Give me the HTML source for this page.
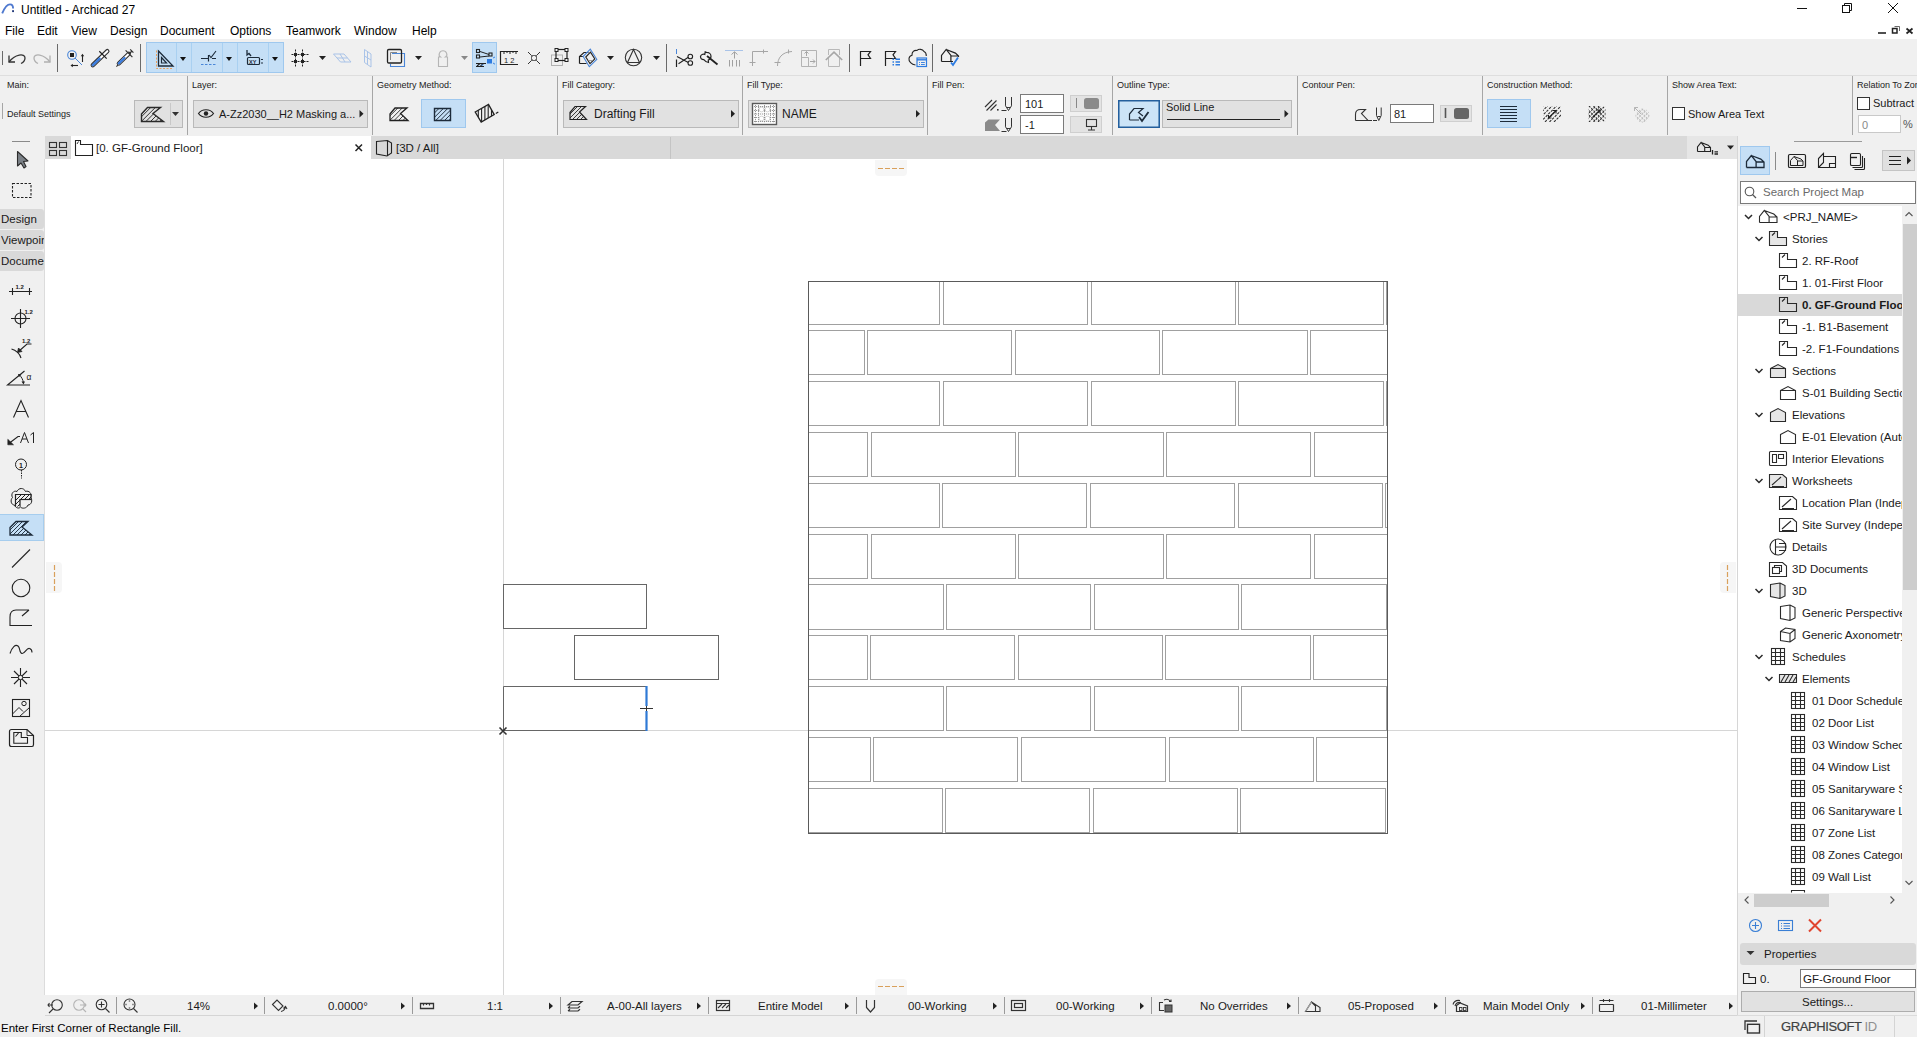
<!DOCTYPE html>
<html><head><meta charset="utf-8">
<style>
*{box-sizing:border-box}
html,body{margin:0;padding:0}
body{width:1917px;height:1037px;overflow:hidden;position:relative;background:#f0f0f0;font-family:"Liberation Sans",sans-serif;font-size:12px;color:#1a1a1a}
.a{position:absolute}
.t{position:absolute;white-space:nowrap;line-height:14px;color:#1a1a1a}
.lb{position:absolute;white-space:nowrap;font-size:9px;line-height:11px;color:#222}
.sep{position:absolute;width:1px;background:#a6a6a6}
.dd{position:absolute;background:#e1e1e1;border:1px solid #b9b9b9}
.fld{position:absolute;background:#fff;border:1px solid #7a7a7a}
.blu{position:absolute;background:#c5dff6;border:1px solid #9fc8ee}
.tr{position:absolute;white-space:nowrap;font-size:11.5px;line-height:14px;color:#1a1a1a}
svg.ov{position:absolute;left:0;top:0;overflow:visible}
</style></head><body>
<!-- title + menu -->
<div class="a" style="left:0;top:0;width:1917px;height:39px;background:#fff"></div>
<div class="t" style="left:21px;top:3px;font-size:12px;color:#000">Untitled - Archicad 27</div>
<div class="t" style="left:5px;top:24px;font-size:12px;color:#000">File</div>
<div class="t" style="left:37px;top:24px;font-size:12px;color:#000">Edit</div>
<div class="t" style="left:71px;top:24px;font-size:12px;color:#000">View</div>
<div class="t" style="left:110px;top:24px;font-size:12px;color:#000">Design</div>
<div class="t" style="left:160px;top:24px;font-size:12px;color:#000">Document</div>
<div class="t" style="left:230px;top:24px;font-size:12px;color:#000">Options</div>
<div class="t" style="left:286px;top:24px;font-size:12px;color:#000">Teamwork</div>
<div class="t" style="left:354px;top:24px;font-size:12px;color:#000">Window</div>
<div class="t" style="left:412px;top:24px;font-size:12px;color:#000">Help</div>

<!-- toolbar bottom line -->
<div class="a" style="left:0;top:75px;width:1917px;height:1px;background:#dedede"></div>
<!-- toolbar blue groups -->
<div class="blu" style="left:146px;top:42px;width:138px;height:31px"></div>
<div class="a" style="left:176px;top:43px;width:1px;height:29px;background:#a9d0f1"></div>
<div class="a" style="left:191px;top:43px;width:1px;height:29px;background:#a9d0f1"></div>
<div class="a" style="left:222px;top:43px;width:1px;height:29px;background:#a9d0f1"></div>
<div class="a" style="left:237px;top:43px;width:1px;height:29px;background:#a9d0f1"></div>
<div class="a" style="left:268px;top:43px;width:1px;height:29px;background:#a9d0f1"></div>
<div class="blu" style="left:472px;top:42px;width:25px;height:31px"></div>
<!-- toolbar separators -->
<div class="a" style="left:2px;top:51px;width:1px;height:14px;background:#6a6a6a"></div>
<div class="a" style="left:57px;top:44px;width:1px;height:28px;background:#6a6a6a"></div>
<div class="a" style="left:140px;top:44px;width:1px;height:28px;background:#6a6a6a"></div>
<div class="a" style="left:666px;top:44px;width:1px;height:28px;background:#6a6a6a"></div>
<div class="a" style="left:849px;top:44px;width:1px;height:28px;background:#6a6a6a"></div>
<div class="a" style="left:932px;top:44px;width:1px;height:28px;background:#6a6a6a"></div>

<!-- info box separators -->
<div class="sep" style="left:187px;top:76px;height:59px"></div>
<div class="sep" style="left:372px;top:76px;height:59px"></div>
<div class="sep" style="left:557px;top:76px;height:59px"></div>
<div class="sep" style="left:742px;top:76px;height:59px"></div>
<div class="sep" style="left:927px;top:76px;height:59px"></div>
<div class="sep" style="left:1112px;top:76px;height:59px"></div>
<div class="sep" style="left:1297px;top:76px;height:59px"></div>
<div class="sep" style="left:1482px;top:76px;height:59px"></div>
<div class="sep" style="left:1667px;top:76px;height:59px"></div>
<div class="sep" style="left:1852px;top:76px;height:59px"></div>
<div class="sep" style="left:2px;top:103px;height:16px"></div>

<!-- tab bar -->
<div class="a" style="left:45px;top:136px;width:1642px;height:23px;background:#d9d9d9"></div>
<div class="a" style="left:1687px;top:136px;width:50px;height:23px;background:#e6e6e6"></div>
<div class="a" style="left:71px;top:136px;width:300px;height:23px;background:#fff"></div>
<div class="a" style="left:670px;top:137px;width:1px;height:22px;background:#c4c4c4"></div>

<!-- canvas -->
<div class="a" style="left:45px;top:159px;width:1692px;height:836px;background:#fff"></div>
<div class="a" style="left:503px;top:159px;width:1px;height:836px;background:#d6d6d6"></div>
<div class="a" style="left:45px;top:730px;width:1692px;height:1px;background:#d6d6d6"></div>
<!-- canvas handles -->
<div class="a" style="left:875px;top:160px;width:32px;height:16px;background:#f6f6f6;border-radius:0 0 4px 4px"></div>
<div class="a" style="left:875px;top:979px;width:32px;height:16px;background:#f6f6f6;border-radius:4px 4px 0 0"></div>
<div class="a" style="left:46px;top:562px;width:16px;height:31px;background:#f6f6f6;border-radius:0 4px 4px 0"></div>
<div class="a" style="left:1720px;top:562px;width:16px;height:31px;background:#f6f6f6;border-radius:4px 0 0 4px"></div>

<!-- toolbox edge -->
<div class="a" style="left:44px;top:159px;width:1px;height:836px;background:#dcdcdc"></div>

<!-- quick options bar -->
<div class="a" style="left:45px;top:995px;width:1692px;height:20px;background:#f0f0f0"></div>
<div class="a" style="left:45px;top:1015px;width:1692px;height:1px;background:#d5d5d5"></div>
<!-- status bar -->
<div class="t" style="left:1px;top:1021px;font-size:11.5px;color:#000">Enter First Corner of Rectangle Fill.</div>
<!-- info box labels -->
<div class="lb" style="left:7px;top:80px">Main:</div>
<div class="lb" style="left:192px;top:80px">Layer:</div>
<div class="lb" style="left:377px;top:80px">Geometry Method:</div>
<div class="lb" style="left:562px;top:80px">Fill Category:</div>
<div class="lb" style="left:747px;top:80px">Fill Type:</div>
<div class="lb" style="left:932px;top:80px">Fill Pen:</div>
<div class="lb" style="left:1117px;top:80px">Outline Type:</div>
<div class="lb" style="left:1302px;top:80px">Contour Pen:</div>
<div class="lb" style="left:1487px;top:80px">Construction Method:</div>
<div class="lb" style="left:1672px;top:80px">Show Area Text:</div>
<div class="lb" style="left:1857px;top:80px">Relation To Zone:</div>
<div class="lb" style="left:7px;top:109px">Default Settings</div>

<!-- main favorites button -->
<div class="dd" style="left:134px;top:100px;width:49px;height:28px"></div>
<div class="a" style="left:170px;top:103px;width:1px;height:22px;background:#c8c8c8"></div>
<!-- layer dropdown -->
<div class="dd" style="left:193px;top:100px;width:175px;height:28px"></div>
<div class="t" style="left:219px;top:107px;font-size:11px">A-Zz2030__H2 Masking a...</div>
<!-- geometry -->
<div class="blu" style="left:421px;top:99px;width:45px;height:29px"></div>
<!-- fill category -->
<div class="dd" style="left:563px;top:100px;width:176px;height:28px"></div>
<div class="t" style="left:594px;top:107px;font-size:12px">Drafting Fill</div>
<!-- fill type -->
<div class="dd" style="left:748px;top:100px;width:176px;height:28px"></div>
<div class="t" style="left:782px;top:107px;font-size:12px">NAME</div>
<!-- fill pen fields -->
<div class="fld" style="left:1020px;top:94px;width:44px;height:19px"></div>
<div class="t" style="left:1025px;top:97px;font-size:11px">101</div>
<div class="fld" style="left:1020px;top:115px;width:44px;height:19px"></div>
<div class="t" style="left:1025px;top:118px;font-size:11px">-1</div>
<div class="dd" style="left:1070px;top:95px;width:32px;height:17px;background:#e3e3e3;border-color:#cfcfcf"></div>
<div class="dd" style="left:1070px;top:116px;width:32px;height:17px;background:#e3e3e3;border-color:#cfcfcf"></div>
<!-- outline type -->
<div class="blu" style="left:1118px;top:100px;width:42px;height:28px;border-color:#2a7ad6;background:#cce4f7"></div>
<div class="dd" style="left:1162px;top:100px;width:130px;height:28px"></div>
<div class="t" style="left:1166px;top:100px;font-size:11px">Solid Line</div>
<div class="a" style="left:1167px;top:119px;width:113px;height:1px;background:#222"></div>
<!-- contour pen -->
<div class="fld" style="left:1390px;top:104px;width:44px;height:19px"></div>
<div class="t" style="left:1394px;top:107px;font-size:11px">81</div>
<div class="dd" style="left:1440px;top:105px;width:32px;height:17px;background:#e3e3e3;border-color:#cfcfcf"></div>
<!-- construction method -->
<div class="blu" style="left:1487px;top:99px;width:44px;height:29px"></div>
<!-- show area text -->
<div class="a" style="left:1672px;top:107px;width:13px;height:13px;background:#fff;border:1px solid #333"></div>
<div class="t" style="left:1688px;top:107px;font-size:11px">Show Area Text</div>
<!-- relation to zone -->
<div class="a" style="left:1857px;top:97px;width:13px;height:13px;background:#fff;border:1px solid #333"></div>
<div class="t" style="left:1873px;top:96px;font-size:11px">Subtract</div>
<div class="fld" style="left:1858px;top:115px;width:43px;height:18px;border-color:#c9c9c9"></div>
<div class="t" style="left:1862px;top:118px;font-size:11px;color:#888">0</div>
<div class="t" style="left:1903px;top:117px;font-size:11px;color:#555">%</div>
<!-- tabs text -->
<div class="t" style="left:96px;top:141px;font-size:11.5px">[0. GF-Ground Floor]</div>
<div class="t" style="left:396px;top:141px;font-size:11.5px">[3D / All]</div>

<!-- toolbox palette tabs -->
<div class="a" style="left:0;top:209px;width:44px;height:20px;background:#d9d9d9;border-radius:0 3px 3px 0"></div>
<div class="a" style="left:0;top:230px;width:44px;height:20px;background:#d9d9d9;border-radius:0 3px 3px 0"></div>
<div class="a" style="left:0;top:251px;width:44px;height:20px;background:#d9d9d9;border-radius:0 3px 3px 0"></div>
<div class="t" style="left:1px;top:212px;font-size:11.5px;width:43px;overflow:hidden">Design</div>
<div class="t" style="left:1px;top:233px;font-size:11.5px;width:43px;overflow:hidden">Viewpoints</div>
<div class="t" style="left:1px;top:254px;font-size:11.5px;width:43px;overflow:hidden">Document</div>
<div class="a" style="left:0;top:514px;width:44px;height:27px;background:#c5dff6;border:1px solid #a6cdee;border-left:0"></div>

<!-- navigator -->
<div class="a" style="left:1737px;top:136px;width:180px;height:901px;background:#f0f0f0"></div>
<div class="a" style="left:1794px;top:141px;width:68px;height:1px;background:#9a9a9a"></div>
<div class="blu" style="left:1740px;top:146px;width:30px;height:29px"></div>
<div class="a" style="left:1775px;top:152px;width:1px;height:18px;background:#8a8a8a"></div>
<div class="dd" style="left:1882px;top:150px;width:33px;height:21px;background:#e0e0e0;border-color:#c4c4c4"></div>
<div class="fld" style="left:1740px;top:181px;width:176px;height:23px"></div>
<div class="t" style="left:1763px;top:185px;font-size:11.5px;color:#6a6a6a">Search Project Map</div>
<div class="a" style="left:1738px;top:206px;width:164px;height:687px;background:#fff"></div>
<div class="a" style="left:1902px;top:206px;width:15px;height:687px;background:#f0f0f0"></div>
<div class="a" style="left:1903px;top:224px;width:14px;height:366px;background:#cdcdcd"></div>
<div class="a" style="left:1738px;top:294px;width:164px;height:22px;background:#d9d9d9"></div>
<!-- tree -->
<div class="tr" style="left:1783px;top:210px">&lt;PRJ_NAME&gt;</div>
<div class="tr" style="left:1792px;top:232px">Stories</div>
<div class="tr" style="left:1802px;top:254px">2. RF-Roof</div>
<div class="tr" style="left:1802px;top:276px">1. 01-First Floor</div>
<div class="tr" style="left:1802px;top:298px;font-weight:bold">0. GF-Ground Floor</div>
<div class="tr" style="left:1802px;top:320px">-1. B1-Basement</div>
<div class="tr" style="left:1802px;top:342px">-2. F1-Foundations</div>
<div class="tr" style="left:1792px;top:364px">Sections</div>
<div class="tr" style="left:1802px;top:386px">S-01 Building Section</div>
<div class="tr" style="left:1792px;top:408px">Elevations</div>
<div class="tr" style="left:1802px;top:430px">E-01 Elevation (Auto)</div>
<div class="tr" style="left:1792px;top:452px">Interior Elevations</div>
<div class="tr" style="left:1792px;top:474px">Worksheets</div>
<div class="tr" style="left:1802px;top:496px">Location Plan (Independent)</div>
<div class="tr" style="left:1802px;top:518px">Site Survey (Independent)</div>
<div class="tr" style="left:1792px;top:540px">Details</div>
<div class="tr" style="left:1792px;top:562px">3D Documents</div>
<div class="tr" style="left:1792px;top:584px">3D</div>
<div class="tr" style="left:1802px;top:606px">Generic Perspective</div>
<div class="tr" style="left:1802px;top:628px">Generic Axonometry</div>
<div class="tr" style="left:1792px;top:650px">Schedules</div>
<div class="tr" style="left:1802px;top:672px">Elements</div>
<div class="tr" style="left:1812px;top:694px">01 Door Schedule</div>
<div class="tr" style="left:1812px;top:716px">02 Door List</div>
<div class="tr" style="left:1812px;top:738px">03 Window Schedule</div>
<div class="tr" style="left:1812px;top:760px">04 Window List</div>
<div class="tr" style="left:1812px;top:782px">05 Sanitaryware Schedule</div>
<div class="tr" style="left:1812px;top:804px">06 Sanitaryware List</div>
<div class="tr" style="left:1812px;top:826px">07 Zone List</div>
<div class="tr" style="left:1812px;top:848px">08 Zones Category</div>
<div class="tr" style="left:1812px;top:870px">09 Wall List</div>
<!-- re-cover tree overflow on right -->
<div class="a" style="left:1902px;top:206px;width:1px;height:687px;background:#f0f0f0"></div>
<div class="a" style="left:1903px;top:206px;width:14px;height:18px;background:#f0f0f0"></div>
<div class="a" style="left:1903px;top:224px;width:14px;height:366px;background:#cdcdcd"></div>
<div class="a" style="left:1903px;top:590px;width:14px;height:303px;background:#f0f0f0"></div>
<!-- h scrollbar -->
<div class="a" style="left:1738px;top:893px;width:179px;height:15px;background:#f0f0f0"></div>
<div class="a" style="left:1754px;top:894px;width:75px;height:13px;background:#cdcdcd"></div>
<!-- properties -->
<div class="a" style="left:1740px;top:943px;width:176px;height:22px;background:#d9d9d9;border-radius:3px"></div>
<div class="t" style="left:1764px;top:947px;font-size:11.5px">Properties</div>
<div class="t" style="left:1760px;top:972px;font-size:11.5px">0.</div>
<div class="fld" style="left:1800px;top:969px;width:116px;height:19px"></div>
<div class="t" style="left:1803px;top:972px;font-size:11.5px">GF-Ground Floor</div>
<div class="dd" style="left:1741px;top:991px;width:174px;height:21px;background:#e1e1e1;border-color:#adadad"></div>
<div class="t" style="left:1802px;top:995px;font-size:11.5px">Settings...</div>
<div class="t" style="left:1781px;top:1020px;font-size:13px;color:#3f4242;letter-spacing:-0.4px;-webkit-text-stroke:0.2px #3f4242">GRAPHISOFT <span style="color:#8f8f8f;-webkit-text-stroke:0">ID</span></div>

<!-- quick options text -->
<div class="t" style="left:187px;top:999px;font-size:11.5px">14%</div>
<div class="t" style="left:328px;top:999px;font-size:11.5px">0.0000°</div>
<div class="t" style="left:487px;top:999px;font-size:11.5px">1:1</div>
<div class="t" style="left:607px;top:999px;font-size:11.5px">A-00-All layers</div>
<div class="t" style="left:758px;top:999px;font-size:11.5px">Entire Model</div>
<div class="t" style="left:908px;top:999px;font-size:11.5px">00-Working</div>
<div class="t" style="left:1056px;top:999px;font-size:11.5px">00-Working</div>
<div class="t" style="left:1200px;top:999px;font-size:11.5px">No Overrides</div>
<div class="t" style="left:1348px;top:999px;font-size:11.5px">05-Proposed</div>
<div class="t" style="left:1483px;top:999px;font-size:11.5px">Main Model Only</div>
<div class="t" style="left:1641px;top:999px;font-size:11.5px">01-Millimeter</div>
<div class="a" style="left:116px;top:997px;width:1px;height:17px;background:#9a9a9a"></div>
<div class="a" style="left:264px;top:997px;width:1px;height:17px;background:#9a9a9a"></div>
<div class="a" style="left:412px;top:997px;width:1px;height:17px;background:#9a9a9a"></div>
<div class="a" style="left:560px;top:997px;width:1px;height:17px;background:#9a9a9a"></div>
<div class="a" style="left:708px;top:997px;width:1px;height:17px;background:#9a9a9a"></div>
<div class="a" style="left:856px;top:997px;width:1px;height:17px;background:#9a9a9a"></div>
<div class="a" style="left:1004px;top:997px;width:1px;height:17px;background:#9a9a9a"></div>
<div class="a" style="left:1151px;top:997px;width:1px;height:17px;background:#9a9a9a"></div>
<div class="a" style="left:1298px;top:997px;width:1px;height:17px;background:#9a9a9a"></div>
<div class="a" style="left:1445px;top:997px;width:1px;height:17px;background:#9a9a9a"></div>
<div class="a" style="left:1592px;top:997px;width:1px;height:17px;background:#9a9a9a"></div>
<svg class="ov" width="1917" height="1037">
<rect x="808.5" y="281.5" width="579" height="552" fill="#fff" stroke="none"/>
<g fill="none" stroke="#a0a0a0" stroke-width="1">
<rect x="808.5" y="281.5" width="131" height="43"/>
<rect x="943.5" y="281.5" width="144" height="43"/>
<rect x="1091.5" y="281.5" width="144" height="43"/>
<rect x="1238.5" y="281.5" width="145" height="43"/>
<rect x="1386.5" y="281.5" width="1" height="43"/>
<rect x="808.5" y="330.5" width="56" height="44"/>
<rect x="867.5" y="330.5" width="144" height="44"/>
<rect x="1015.5" y="330.5" width="144" height="44"/>
<rect x="1162.5" y="330.5" width="145" height="44"/>
<rect x="1310.5" y="330.5" width="77" height="44"/>
<rect x="808.5" y="381.5" width="131" height="44"/>
<rect x="943.5" y="381.5" width="144" height="44"/>
<rect x="1091.5" y="381.5" width="144" height="44"/>
<rect x="1238.5" y="381.5" width="145" height="44"/>
<rect x="1386.5" y="381.5" width="1" height="44"/>
<rect x="808.5" y="432.5" width="59" height="44"/>
<rect x="871.5" y="432.5" width="144" height="44"/>
<rect x="1018.5" y="432.5" width="145" height="44"/>
<rect x="1166.5" y="432.5" width="144" height="44"/>
<rect x="1314.5" y="432.5" width="73" height="44"/>
<rect x="808.5" y="483.5" width="131" height="44"/>
<rect x="942.5" y="483.5" width="144" height="44"/>
<rect x="1090.5" y="483.5" width="144" height="44"/>
<rect x="1238.5" y="483.5" width="144" height="44"/>
<rect x="1385.5" y="483.5" width="2" height="44"/>
<rect x="808.5" y="534.5" width="59" height="44"/>
<rect x="871.5" y="534.5" width="144" height="44"/>
<rect x="1018.5" y="534.5" width="145" height="44"/>
<rect x="1166.5" y="534.5" width="144" height="44"/>
<rect x="1314.5" y="534.5" width="73" height="44"/>
<rect x="808.5" y="584.5" width="135" height="45"/>
<rect x="946.5" y="584.5" width="144" height="45"/>
<rect x="1094.5" y="584.5" width="144" height="45"/>
<rect x="1241.5" y="584.5" width="145" height="45"/>
<rect x="808.5" y="635.5" width="59" height="44"/>
<rect x="870.5" y="635.5" width="144" height="44"/>
<rect x="1018.5" y="635.5" width="144" height="44"/>
<rect x="1165.5" y="635.5" width="145" height="44"/>
<rect x="1313.5" y="635.5" width="74" height="44"/>
<rect x="808.5" y="686.5" width="135" height="44"/>
<rect x="946.5" y="686.5" width="144" height="44"/>
<rect x="1094.5" y="686.5" width="144" height="44"/>
<rect x="1241.5" y="686.5" width="145" height="44"/>
<rect x="808.5" y="737.5" width="62" height="44"/>
<rect x="873.5" y="737.5" width="144" height="44"/>
<rect x="1021.5" y="737.5" width="144" height="44"/>
<rect x="1169.5" y="737.5" width="144" height="44"/>
<rect x="1316.5" y="737.5" width="71" height="44"/>
<rect x="808.5" y="788.5" width="134" height="44"/>
<rect x="945.5" y="788.5" width="144" height="44"/>
<rect x="1093.5" y="788.5" width="144" height="44"/>
<rect x="1240.5" y="788.5" width="145" height="44"/>
</g>
<rect x="808.5" y="281.5" width="579" height="552" fill="none" stroke="#5a5a5a" stroke-width="1"/>
<g fill="none" stroke="#666" stroke-width="1">
<rect x="503.5" y="584.5" width="143" height="44"/>
<rect x="574.5" y="635.5" width="144" height="44"/>
<path d="M503.5 730.5V686.5H646"/>
<path d="M503.5 730.5H646"/>
</g>
<path d="M646.5 686V706M646.5 711V731" stroke="#2f7ad6" stroke-width="2.2"/>
<path d="M640 708.5H653M646.5 706V711" stroke="#333" stroke-width="1"/>
<path d="M499.5 727.5l7 7M506.5 727.5l-7 7" stroke="#333" stroke-width="1.6"/>
<g stroke="#d9a05b" stroke-width="1.2">
<path d="M878 168.5h5M885 168.5h5M892 168.5h5M899 168.5h5"/>
<path d="M878 986.5h5M885 986.5h5M892 986.5h5M899 986.5h5"/>
<path d="M54.5 565v5M54.5 572v5M54.5 579v5M54.5 586v5"/>
<path d="M1727.5 565v5M1727.5 572v5M1727.5 579v5M1727.5 586v5"/>
</g>
</svg>
<svg class="ov" width="1917" height="1037" fill="none" stroke="#262626" stroke-width="1.2" stroke-linecap="butt" stroke-linejoin="miter">
<!-- app logo -->
<path d="M2.2 13.3C4.5 8 7 4.4 10 4.4C12.3 4.4 13.1 6.2 13.1 8.6" stroke="#4f79cf" stroke-width="1.9"/>
<rect x="12.1" y="10.2" width="1.9" height="1.9" fill="#233a7a" stroke="none"/>
<!-- window controls -->
<path d="M1797 8.5H1807" stroke="#111" stroke-width="1"/>
<rect x="1842.5" y="5.5" width="7" height="7" stroke="#111" stroke-width="1"/>
<path d="M1844.5 5.5V3.5H1851.5V10.5H1849.5" stroke="#111" stroke-width="1"/>
<path d="M1888 3L1898 13M1898 3L1888 13" stroke="#111" stroke-width="1"/>
<path d="M1878 33H1886" stroke="#222" stroke-width="1.6"/>
<rect x="1892.5" y="28.5" width="4.5" height="4.5" stroke="#222" stroke-width="1.5"/>
<path d="M1894.5 26.5H1899.5V31" stroke="#444" stroke-width="0.8"/>
<path d="M1906.5 28.5L1912.5 33.5M1912.5 28.5L1906.5 33.5" stroke="#222" stroke-width="1.7"/>

<!-- ===== toolbar ===== -->
<!-- undo -->
<path d="M9 62C15 54 25 53 25 58C25 61 23 62.5 21 63.5" stroke="#333" stroke-width="1.3"/>
<path d="M9 55.5V62H15" stroke="#333" stroke-width="1.3"/>
<!-- redo -->
<path d="M50 62C44 54 34 53 34 58C34 61 36 62.5 38 63.5" stroke="#b0b0b0" stroke-width="1.3"/>
<path d="M50 55.5V62H44" stroke="#b0b0b0" stroke-width="1.3"/>
<!-- find select -->
<circle cx="72" cy="55" r="4.3" stroke="#4a86d8" stroke-width="1.1"/>
<rect x="70" y="53" width="4" height="4" fill="#222" stroke="none"/>
<path d="M75 58L82 65" stroke="#4a86d8" stroke-width="1"/>
<path d="M82.5 55V62" stroke="#222" stroke-width="1.1"/><path d="M80.8 56.2L82.5 53.8L84.2 56.2Z" fill="#222" stroke="none"/>
<path d="M72 65.5H78" stroke="#222" stroke-width="1.1"/><path d="M72.8 63.8L70.5 65.5L72.8 67.2Z" fill="#222" stroke="none"/>
<!-- eyedropper -->
<path d="M92.8 65.2L107.3 51.2" stroke="#2f2f2f" stroke-width="4.4" stroke-linecap="round"/>
<path d="M92.8 65.2L107.3 51.2" stroke="#fff" stroke-width="2.2" stroke-linecap="round"/>
<path d="M92.8 65.2L99.6 58.6" stroke="#3b7de0" stroke-width="2.4" stroke-linecap="round"/>
<path d="M99.3 51.3L106.7 58.6" stroke="#222" stroke-width="1.2"/>
<!-- syringe -->
<path d="M116.4 66.6L118.8 64.2" stroke="#333" stroke-width="1.1"/>
<path d="M118.8 63.4L128.8 53.8" stroke="#2f2f2f" stroke-width="4.2" stroke-linecap="round"/>
<path d="M118.8 63.4L128.8 53.8" stroke="#fff" stroke-width="2.1" stroke-linecap="round"/>
<path d="M118.8 63.4L124.5 58" stroke="#3b7de0" stroke-width="2.3" stroke-linecap="round"/>
<path d="M125.6 50.4L132.4 57.2M130.2 49.4L133.4 52.6M129.5 53.5L132 51" stroke="#333" stroke-width="1.2"/>
<!-- blue group icons -->
<path d="M156.5 50.5V68.5H172" stroke="#e9a05e" stroke-width="1" stroke-dasharray="2 1.5"/>
<path d="M158.5 51L173 66H158.5Z" stroke="#1d2b3a" stroke-width="1.3"/>
<path d="M161.5 57.5L166.5 63H161.5Z" stroke="#1d2b3a" stroke-width="1.2"/>
<path d="M180 57L186 57L183 61Z" fill="#111" stroke="none"/>
<path d="M201 58.5H208M212 58.5H216M208.5 55V61.5" stroke="#1d2b3a" stroke-width="1.2"/>
<path d="M209 55L211 57.5L216 51" stroke="#1d2b3a" stroke-width="1.1"/>
<path d="M201 64.5H216" stroke="#4a86d8" stroke-width="1" stroke-dasharray="2.5 1.5"/>
<path d="M226 57L232 57L229 61Z" fill="#111" stroke="none"/>
<path d="M247 50V55L249 53.5L251 56" stroke="#1d2b3a" stroke-width="1.3"/>
<rect x="247.5" y="57.5" width="12" height="7" rx="1" stroke="#1d2b3a" stroke-width="1.2"/>
<text x="249" y="63.5" font-family="Liberation Sans" font-size="5.5" font-weight="bold" fill="#1d2b3a" stroke="none">XY</text>
<path d="M261 59.5H263M261 63H263" stroke="#1d2b3a" stroke-width="1"/>
<path d="M272 57L278 57L275 61Z" fill="#111" stroke="none"/>

<!-- grid snap -->
<path d="M295.5 49.5V66.5M302.5 49.5V66.5M291.5 54.5H308.5M291.5 61.5H308.5" stroke="#222" stroke-width="1" stroke-dasharray="2 1"/>
<rect x="294" y="53" width="3" height="3" fill="#222" stroke="none"/>
<rect x="301" y="53" width="3" height="3" fill="#222" stroke="none"/>
<rect x="294" y="60" width="3" height="3" fill="#222" stroke="none"/>
<rect x="301" y="60" width="3" height="3" fill="#222" stroke="none"/>
<path d="M319 56L326 56L322.5 60Z" fill="#222" stroke="none"/>
<!-- greyed planes -->
<path d="M333.5 54L344 54L351 62L340.5 62Z M337 58H347.5M340 54L345 62" stroke="#a9c3e8" stroke-width="1"/>
<path d="M364.5 49.5L371 54V67L364.5 62.5Z M364.5 56L371 60M367.5 51.5V64.5" stroke="#a9c3e8" stroke-width="1"/>
<!-- stacked rect -->
<path d="M392 53.5H404.5V66.5H390.5V64" stroke="#4a86d8" stroke-width="1.1"/>
<rect x="387.5" y="49.5" width="14" height="13.5" rx="1.3" stroke="#222" stroke-width="1.3"/>
<path d="M390.5 60V52.5H397" stroke="#888" stroke-width="1"/>
<path d="M415 56L422 56L418.5 60Z" fill="#222" stroke="none"/>
<!-- lock greyed -->
<path d="M438.5 66.5V57H440.5C439 56 438.8 54.5 439.5 53C440.5 50 445.5 50 446.5 53C447.2 54.5 447 56 445.5 57H447.5V66.5Z" stroke="#b5b5b5" stroke-width="1.1"/>
<path d="M461 56L468 56L464.5 60Z" fill="#888" stroke="none"/>
<!-- blue single: nodes edit -->
<rect x="476.5" y="49.5" width="3" height="3" stroke="#222" stroke-width="1.1"/>
<rect x="476.5" y="55" width="3" height="3" stroke="#222" stroke-width="1.1"/>
<rect x="489" y="53" width="3" height="3" stroke="#222" stroke-width="1.1"/>
<path d="M480 51.5L489 54.5M480 57L489 56" stroke="#222" stroke-width="1"/>
<rect x="487" y="59" width="5" height="4.5" fill="#2d7be0" stroke="none"/>
<path d="M476 63.5H486M476 66.5H484M477 66L480 63.5M480.5 66L483.5 63.5" stroke="#222" stroke-width="1.1"/>
<path d="M493 58l2-1M493 63l2 1.2M483 64.5l-1.5 1" stroke="#2d7be0" stroke-width="0.9"/>
<!-- ruler 12 -->
<path d="M500.5 65V51.5H518M500.5 64.5H518" stroke="#222" stroke-width="1.2"/>
<path d="M504 51.5V54M507 51.5V53M510 51.5V54M513 51.5V53M516 51.5V54" stroke="#222" stroke-width="1"/>
<text x="504" y="62.5" font-family="Liberation Sans" font-size="7.5" fill="#222" stroke="none">1 2</text>
<!-- X square -->
<path d="M528 52L532.5 56.5M540 52L535.5 56.5M528 64L532.5 59.5M540 64L535.5 59.5" stroke="#333" stroke-width="1"/>
<rect x="531.5" y="55.5" width="5" height="5" stroke="#666" stroke-width="1"/>
<!-- selection nodes -->
<rect x="551.5" y="55" width="11" height="10.5" stroke="#aaa" stroke-width="0.9"/>
<rect x="556" y="49.5" width="11" height="11" stroke="#222" stroke-width="1.2"/>
<rect x="555" y="48.5" width="3" height="3" fill="#f0f0f0" stroke="#222" stroke-width="1"/>
<rect x="565" y="48.5" width="3" height="3" fill="#f0f0f0" stroke="#222" stroke-width="1"/>
<rect x="555" y="58.5" width="3" height="3" fill="#f0f0f0" stroke="#222" stroke-width="1"/>
<rect x="565" y="58.5" width="3" height="3" fill="#f0f0f0" stroke="#222" stroke-width="1"/>
<!-- rotated boxes -->
<path d="M579.5 63.5V56.5L584 52.5H588.5M579.5 63.5H586.5M579.5 56.5H584" stroke="#222" stroke-width="1.2"/>
<path d="M583.2 56.5L590.3 49.1L596.8 59.3L589.3 66.7Z" stroke="#4a86d8" stroke-width="1.1"/>
<path d="M585.8 57L590.5 52.2L594.8 59L590 63.6Z" stroke="#222" stroke-width="1.1"/>
<path d="M588 60.5H593" stroke="#888" stroke-width="0.8"/>
<path d="M607 56L614 56L610.5 60Z" fill="#222" stroke="none"/>
<!-- circle triangle -->
<circle cx="633.5" cy="57.5" r="8.2" stroke="#333" stroke-width="1.1"/>
<path d="M633.5 49.5L627.5 62.5H639.5Z" stroke="#333" stroke-width="1.1"/>
<path d="M653 56L660 56L656.5 60Z" fill="#222" stroke="none"/>

<!-- scissors -->
<path d="M676.5 49V54" stroke="#4a86d8" stroke-width="1"/>
<path d="M676.5 59.5V67" stroke="#222" stroke-width="1.2"/>
<path d="M677 56.5L688.3 62.5M678.5 63.7L688.3 57.2" stroke="#222" stroke-width="1.1"/>
<circle cx="690.3" cy="56.5" r="2.3" stroke="#222" stroke-width="1.1"/>
<circle cx="690.3" cy="63" r="2.3" stroke="#222" stroke-width="1.1"/>
<!-- wand/axe -->
<path d="M700.5 56.5C701 54.5 703 53.8 704.8 54.5L705.2 51.8L706.5 52.3C709 52.3 711 54 711 56.2C711 58.2 709.8 59.5 708.3 60L708.5 62.5C706.5 62.3 704.8 60.8 703.8 59.6C702 59.6 700.5 58.5 700.5 56.5Z" stroke="#222" stroke-width="1.2"/>
<path d="M707 56L717.5 64.5" stroke="#222" stroke-width="1.8"/>
<!-- offset greyed -->
<path d="M725 50.5H743" stroke="#a9c3e8" stroke-width="1"/>
<path d="M734.5 52V58.5M731.5 54.5L734.5 51.8L737.5 54.5M729.5 60V66.5M732.5 60V66.5M736.5 60V66.5M739.5 60V66.5" stroke="#a0a0a0" stroke-width="1"/>
<!-- fillet greyed -->
<path d="M752.5 66V51.5H768M749.5 62.5H755.5M763.5 49.5V53.5" stroke="#a6a6a6" stroke-width="1"/>
<path d="M777.5 66C777.5 58 782 52 792 51.5M774.5 62.5H780.5M788.5 49.5V53.5" stroke="#a6a6a6" stroke-width="1"/>
<!-- split box greyed -->
<path d="M801.5 50.5H816.5V66.5H801.5ZM801.5 57.5H808.5V66.5" stroke="#b3b3b3" stroke-width="1"/>
<path d="M806.5 56V51.5M804.5 53.5L806.5 51.5L808.5 53.5M810 61.5H815M813 59.5L815 61.5L813 63.5" stroke="#a6a6a6" stroke-width="1"/>
<!-- house greyed -->
<path d="M828.5 58V66.5H839.5V58M828.5 55V49.5H839.5V55" stroke="#b8b8b8" stroke-width="1"/><path d="M825.8 60L834 52.2L842.2 60" stroke="#a6a6a6" stroke-width="1.6"/>
<!-- flags -->
<path d="M860.5 66V51.5H870.5L868 54.8L870.5 58.5H860.5" stroke="#222" stroke-width="1.2"/>
<path d="M885.5 66V51.5H895.5L893 54.8L895.5 58.5H885.5" stroke="#222" stroke-width="1.2"/>
<path d="M892.5 59.2H894M895.5 59.2H900M892.5 62H894M895.5 62H900M892.5 64.8H894M895.5 64.8H900" stroke="#2d7be0" stroke-width="1.6"/>
<!-- cloud -->
<path d="M915.5 65C911.5 64.5 908.5 61.5 909 58.5C909.3 56.5 910.5 55.5 912 55.2C911.8 52 914 50 917 50.5C918.5 48.8 922.5 48.8 924 51.5C925.5 52 926.3 53.5 926.3 56" stroke="#222" stroke-width="1.1"/>
<rect x="917" y="58" width="9.5" height="8.5" fill="#f0f0f0" stroke="#2d7be0" stroke-width="1.2"/>
<path d="M917 59.8H926.5" stroke="#2d7be0" stroke-width="1.4"/>
<path d="M919 62.5H920M921 62.5H924.8M919 64.5H920M921 64.5H924.8" stroke="#2d7be0" stroke-width="0.9"/>
<!-- house check -->
<path d="M941.5 61.5V55.5L946.2 49.5L950.9 55.5V61.5M941.5 61.5H953M958.5 57V56.0L955.4 53.1L946.2 49.5M950.9 56.0H958.5" stroke="#222" stroke-width="1.2"/>
<path d="M951 62.5L953 65L958 57.5" stroke="#2d7be0" stroke-width="1.8"/>
</svg>
<svg class="ov" width="1917" height="1037" fill="none" stroke="#262626" stroke-width="1.2">

<!-- favorites hatch shape -->
<clipPath id="hc1"><path d="M141.5 114L147.5 107.5H160.5L153 113.5L163.5 121.5H141.5Z"/></clipPath><g clip-path="url(#hc1)"><path d="M121.40 123L138.40 106M126.00 123L143.00 106M130.60 123L147.60 106M135.20 123L152.20 106M139.80 123L156.80 106M144.40 123L161.40 106M149.00 123L166.00 106M153.60 123L170.60 106M158.20 123L175.20 106M162.80 123L179.80 106M167.40 123L184.40 106" stroke="#333" stroke-width="1.0"/></g><path d="M141.5 114L147.5 107.5H160.5L153 113.5L163.5 121.5H141.5Z" stroke="#2a2a2a" stroke-width="1.4" fill="none"/>
<path d="M172 112H179L175.5 116Z" fill="#333" stroke="none"/>
<!-- eye -->
<path d="M198.5 113.5C202 108.5 210 108.5 213.5 113.5C210 118.5 202 118.5 198.5 113.5Z" stroke="#222" stroke-width="1.2"/>
<circle cx="206" cy="113.5" r="2.2" fill="#222" stroke="none"/>
<path d="M359.5 110V117.5L363.5 113.75Z" fill="#222" stroke="none"/>
<!-- geometry method icons -->
<clipPath id="hc2"><path d="M390 114L395 108H407L400.5 113.5L408 120.5H390Z"/></clipPath><g clip-path="url(#hc2)"><path d="M370.60 122L386.60 106M375.00 122L391.00 106M379.40 122L395.40 106M383.80 122L399.80 106M388.20 122L404.20 106M392.60 122L408.60 106M397.00 122L413.00 106M401.40 122L417.40 106M405.80 122L421.80 106M410.20 122L426.20 106" stroke="#333" stroke-width="0.95"/></g><path d="M390 114L395 108H407L400.5 113.5L408 120.5H390Z" stroke="#222" stroke-width="1.3" fill="none"/>
<clipPath id="hc3"><path d="M434.5 108.5H450.5V120.5H434.5Z"/></clipPath><g clip-path="url(#hc3)"><path d="M416.60 122L431.60 107M421.00 122L436.00 107M425.40 122L440.40 107M429.80 122L444.80 107M434.20 122L449.20 107M438.60 122L453.60 107M443.00 122L458.00 107M447.40 122L462.40 107M451.80 122L466.80 107" stroke="#1d2b3a" stroke-width="0.95"/></g><path d="M434.5 108.5H450.5V120.5H434.5Z" stroke="#1d2b3a" stroke-width="1.4" fill="none"/>
<clipPath id="g3c"><path d="M475.2 112L488.5 104.4L494.2 114.6L481.2 122.1Z"/></clipPath><g clip-path="url(#g3c)" stroke="#222" stroke-width="1.1"><path d="M478.3 100V125M481.6 100V125M484.9 100V125M488.2 100V125M491.5 100V125"/></g><path d="M475.2 112L488.5 104.4L494.2 114.6L481.2 122.1Z" stroke="#222" stroke-width="1.3"/>
<path d="M495.8 113.6L498.3 112" stroke="#222" stroke-width="1.2"/>
<!-- fill category icon -->
<clipPath id="hc4"><path d="M570 112.5L575 106.5H585.5L579.5 112L586.5 119.5H570Z"/></clipPath><g clip-path="url(#hc4)"><path d="M551.00 121L567.00 105M555.00 121L571.00 105M559.00 121L575.00 105M563.00 121L579.00 105M567.00 121L583.00 105M571.00 121L587.00 105M575.00 121L591.00 105M579.00 121L595.00 105M583.00 121L599.00 105M587.00 121L603.00 105" stroke="#333" stroke-width="0.95"/></g><path d="M570 112.5L575 106.5H585.5L579.5 112L586.5 119.5H570Z" stroke="#222" stroke-width="1.2" fill="none"/>
<path d="M731 110V117.5L735 113.75Z" fill="#222" stroke="none"/>
<!-- fill type pattern -->
<rect x="752.5" y="103.5" width="24" height="21" fill="#fff" stroke="#5a5a5a" stroke-width="1.4"/>
<g stroke="#8a8a8a" stroke-width="0.9" stroke-dasharray="1.2 0.8">
<path d="M755.5 105V123M758.5 105V123M764.5 105V123M770.5 105V123M773.5 105V123M754 106.5H775M754 114H775M754 121.5H775M754 110.5H775M754 117.5H775"/>
</g>
<circle cx="761.5" cy="109.5" r="2.4" fill="#fff" stroke="#bbb" stroke-width="0.6"/>
<circle cx="767.5" cy="109.5" r="2.4" fill="#fff" stroke="#bbb" stroke-width="0.6"/>
<circle cx="761.5" cy="118.5" r="2.4" fill="#fff" stroke="#bbb" stroke-width="0.6"/>
<circle cx="767.5" cy="118.5" r="2.4" fill="#fff" stroke="#bbb" stroke-width="0.6"/>
<path d="M916 110V117.5L920 113.75Z" fill="#222" stroke="none"/>
<!-- fill pen icons -->
<path d="M985 107L992 100M986.5 110.5L996.5 100.5M990.5 110.5L996.5 104.5" stroke="#333" stroke-width="1.1"/>
<rect x="997" y="109" width="1.6" height="1.6" fill="#333" stroke="none"/>
<path d="M1005.5 97V105.8L1008.5 110.5L1011.5 105.8V97M1001.5 110.5H1006.5M1007 107.5H1010" stroke="#333" stroke-width="1"/>
<path d="M985 122.5L988.5 119.5H1000L995 125L1000 131H985Z" fill="#8a8a8a" stroke="none"/>
<path d="M1005.5 118V126.8L1008.5 131.5L1011.5 126.8V118M1001.5 131.5H1006.5M1007 128.5H1010" stroke="#333" stroke-width="1"/>
<path d="M1076.5 98V108" stroke="#888" stroke-width="1"/>
<rect x="1084" y="98" width="15" height="11" rx="2.5" fill="#8a8a8a" stroke="none"/>
<rect x="1086.5" y="119.5" width="10" height="7" stroke="#333" stroke-width="1.1"/>
<path d="M1091.5 126.5V129.5M1088 130H1095" stroke="#333" stroke-width="1.1"/>
<!-- outline type -->
<path d="M1118.8 100.8H1159.2V127.2H1118.8Z" stroke="#245f9c" stroke-width="1.5"/>
<path d="M1129.5 120V114L1134 108.5H1143L1138.5 112.5L1143 116M1129.5 120H1139" stroke="#1d2b3a" stroke-width="1.2"/>
<path d="M1139 117L1142 121L1148.5 112" stroke="#1d2b3a" stroke-width="1.8"/>
<path d="M1284.5 110V117.5L1288.5 113.75Z" fill="#222" stroke="none"/>
<!-- contour pen -->
<path d="M1355.5 120.5V114.5C1355.5 111.5 1357.5 109.5 1360.5 109.5H1365.5L1361.5 113.5L1368 120.5H1355.5M1368 120.5H1372" stroke="#333" stroke-width="1.1"/>
<path d="M1376.5 107.5V115.5L1378.8 120.5L1381.2 115.5V107.5M1373 120.5H1377M1377.5 116.5H1380.5" stroke="#333" stroke-width="1"/>
<path d="M1445.5 108V118" stroke="#555" stroke-width="1.6"/>
<rect x="1454" y="108" width="15" height="11" rx="2.5" fill="#666" stroke="none"/>
<!-- construction method -->
<path d="M1500 106.5H1517M1500 109.5H1517M1500 112.5H1517M1500 115.5H1517M1500 118.5H1517M1500 121.5H1517" stroke="#1d2b3a" stroke-width="1.1"/>
<clipPath id="cm2"><rect x="1543" y="106" width="18" height="16"/></clipPath><g clip-path="url(#cm2)" stroke="#333" stroke-width="1.1" stroke-dasharray="2.5 1.2"><path d="M1527 122L1543 106M1531.5 122L1547.5 106M1536 122L1552 106M1540.5 122L1556.5 106M1545 122L1561 106M1549.5 122L1565.5 106M1554 122L1570 106"/></g>
<path d="M1549 117.5L1555.5 111M1553 110.5H1556V113.5M1548.5 115V118H1551.5" stroke="#222" stroke-width="1.1"/>
<clipPath id="cm3"><rect x="1588" y="106" width="17.5" height="16"/></clipPath>
<g clip-path="url(#cm3)" stroke="#333" stroke-width="1.1" stroke-dasharray="2 1.2"><path d="M1580 122L1596 106M1584.5 122L1600.5 106M1589 122L1605 106M1593.5 122L1609.5 106M1598 122L1614 106M1580 106L1596 122M1584.5 106L1600.5 122M1589 106L1605 122M1593.5 106L1609.5 122M1598 106L1614 122"/></g>
<path d="M1592.5 117.5L1599.5 110.5M1596.5 110H1600V113.5" stroke="#222" stroke-width="1.2"/>
<clipPath id="cm4"><circle cx="1642.5" cy="115.5" r="7"/></clipPath>
<g clip-path="url(#cm4)" stroke="#bdbdbd" stroke-width="1.1" stroke-dasharray="2 1.2"><path d="M1628 124L1644 108M1632.5 124L1648.5 108M1637 124L1653 108M1641.5 124L1657.5 108M1628 108L1644 124M1632.5 108L1648.5 124M1637 108L1653 124M1641.5 108L1657.5 124"/></g>
<path d="M1634.5 107.5L1641 114M1634.5 107.5V111M1634.5 107.5H1638" stroke="#b5b5b5" stroke-width="1"/>
</svg>
<svg class="ov" width="1917" height="1037" fill="none" stroke="#262626" stroke-width="1.2">
<!-- ===== tab bar ===== -->
<g stroke="#333" stroke-width="1.1">
<rect x="49.5" y="142.5" width="7" height="5"/><rect x="59.5" y="142.5" width="7" height="5"/>
<rect x="49.5" y="150.5" width="7" height="5"/><rect x="59.5" y="150.5" width="7" height="5"/>
</g>
<path d="M75.5 140.5H80.5V144.5H92.5V155.5H75.5Z" stroke="#222" stroke-width="1.1"/>
<path d="M77 144L78.5 141.5" stroke="#222" stroke-width="0.9"/>
<path d="M355.5 144.5L362 151M362 144.5L355.5 151" stroke="#222" stroke-width="1.5"/>
<path d="M376.5 141.5L387.5 140.5L391.5 143V153L387 156L376.5 154Z M387.5 140.5V156" stroke="#222" stroke-width="1.1"/>
<!-- view options right -->
<path d="M1697.5 151.5V147.0L1701.1 142.5L1704.7 147.0V151.5M1697.5 151.5H1710.5V147.5L1708.2 145.2L1701.1 142.5M1704.7 147.5H1710.5" stroke="#222" stroke-width="1.1"/>
<path d="M1712.5 150V154.5M1714.5 151.8H1718M1714.5 154H1718" stroke="#222" stroke-width="1.3"/>
<path d="M1727 145.5H1734L1730.5 149.5Z" fill="#222" stroke="none"/>

<!-- ===== toolbox ===== -->
<path d="M12 141.5H30" stroke="#8a8a8a" stroke-width="1"/>
<path d="M17.5 151.5L28 161L23.5 161.5L26 166.5L24 168L21 163L17.5 166Z" fill="#7b8187" stroke="#2c2c2c" stroke-width="1.1" stroke-linejoin="round"/>
<rect x="12.5" y="183.5" width="18.5" height="14" stroke="#222" stroke-width="1.1" stroke-dasharray="2.5 1.5"/>
<!-- dimension -->
<path d="M9 291.5H32M12.5 288V295M29.5 288V295" stroke="#222" stroke-width="1.1"/>
<text x="15.5" y="288.5" font-family="Liberation Sans" font-size="6" font-weight="bold" fill="#222" stroke="none">1.2</text>
<!-- radial -->
<circle cx="20.5" cy="318.5" r="5.5" stroke="#222" stroke-width="1.1"/>
<path d="M11 318.5H30M20.5 309V328" stroke="#222" stroke-width="1.1"/>
<text x="24.5" y="313.5" font-family="Liberation Sans" font-size="6" font-weight="bold" fill="#222" stroke="none">1.2</text>
<!-- arc dim -->
<path d="M11.5 349C16 350 20 354 21 358" stroke="#222" stroke-width="1.1"/>
<path d="M31.5 344H27L18.5 351.5" stroke="#222" stroke-width="1.1"/>
<path d="M17.5 352.5L18.5 348L22 351.5Z" fill="#222" stroke="#222" stroke-width="0.8"/>
<text x="22" y="343" font-family="Liberation Sans" font-size="6" font-weight="bold" fill="#222" stroke="none">1.2</text>
<!-- angle -->
<path d="M24.5 371L7.5 385H30" stroke="#222" stroke-width="1.1"/>
<path d="M19 374.5C21.5 377 23 379.5 23.5 383" stroke="#222" stroke-width="1"/>
<path d="M18 374L21.5 374.5L19 377Z M23.5 384.5L21.5 381.5L25 381.5Z" fill="#222" stroke="none"/>
<text x="26.5" y="379.5" font-family="Liberation Sans" font-size="8.5" fill="#222" stroke="none">α</text>
<!-- text A -->
<path d="M13.5 417.5L21 400.5L28.5 417.5M16 411.5H26" stroke="#222" stroke-width="1.1"/>
<!-- label -->
<path d="M9.5 443L18 436.5H20" stroke="#222" stroke-width="1.1"/>
<path d="M7.8 444.8V439.3L13.5 444.8Z" fill="#222" stroke="#222" stroke-width="0.6"/>
<path d="M20.5 443L24.5 432.5L28.5 443M22 439H27" stroke="#222" stroke-width="1"/>
<path d="M30.5 435L33.5 432.5V443" stroke="#222" stroke-width="1"/>
<!-- marker -->
<circle cx="21" cy="464.5" r="5.5" stroke="#222" stroke-width="1"/>
<text x="19" y="467.5" font-family="Liberation Sans" font-size="7" font-weight="bold" fill="#222" stroke="none">1</text>
<path d="M21.5 470V478.5" stroke="#222" stroke-width="1" stroke-dasharray="1.5 1"/>
<!-- change cloud -->
<path d="M14.5 505C11 505 10 500 12.5 497.5C10.5 494 13.5 490 17 491.5C18.5 487.5 24 487.5 25.5 491.5C29 490 32.5 494 30.5 497.5C33 500 31.5 505 28 505C27 508.5 22 509 20.5 507C19 509 15.5 508 14.5 505Z" stroke="#222" stroke-width="1"/>
<clipPath id="ccl"><path d="M15.5 494.5H31V499.5H20V506.5H15.5Z"/></clipPath>
<rect x="15.5" y="494.5" width="15.5" height="12" fill="#f0f0f0" stroke="none" clip-path="url(#ccl)"/>
<g clip-path="url(#ccl)" stroke="#222" stroke-width="1"><path d="M10 510L26 494M14 510L30 494M18 510L34 494M22 510L38 494M6 510L22 494"/></g>
<path d="M15.5 506.5V494.5H31V499.5H20V506.5" stroke="#222" stroke-width="1.2"/>
<path d="M20 499.5H31" stroke="#222" stroke-width="1.2"/>
<!-- fill tool selected -->
<clipPath id="cf"><path d="M10 527.5L16 521.5H28L22 527L32 535H10Z"/></clipPath>
<g clip-path="url(#cf)" stroke="#2a3a4a" stroke-width="1"><path d="M4 540L24 520M8 540L28 520M12 540L32 520M16 540L36 520M20 540L40 520M24 540L44 520M0 540L20 520"/></g>
<path d="M10 527.5L16 521.5H28L22 527L32 535H10Z" stroke="#1d2b3a" stroke-width="1.3"/>
<!-- line -->
<path d="M12 567.5L30 549.5" stroke="#222" stroke-width="1.1"/>
<!-- circle -->
<circle cx="21" cy="588" r="8.8" stroke="#222" stroke-width="1.1"/>
<!-- polyline -->
<path d="M29 610H16C12 610 10 613 10 617V625.5H32M29 610L22 616" stroke="#222" stroke-width="1.1"/>
<!-- spline -->
<path d="M10 653.5C12 647 15.5 644 18 646C20.5 648 19 653 22 653.5C25 654 26.5 647.5 29.5 648.5C31.5 649 32 651 32 652.5" stroke="#222" stroke-width="1.1"/>
<!-- hotspot -->
<path d="M20.5 668V687M11 677.5H30M14 671L27 684M27 671L14 684" stroke="#222" stroke-width="1.1"/>
<circle cx="20.5" cy="677.5" r="2.2" fill="#f0f0f0" stroke="#222" stroke-width="1"/>
<!-- figure -->
<rect x="12.5" y="699.5" width="17" height="17" stroke="#222" stroke-width="1.1"/>
<path d="M12.5 714L19 707.5L23 711.5M19.5 716.5L29.5 707.5" stroke="#222" stroke-width="1"/>
<circle cx="24" cy="703.5" r="2.2" stroke="#222" stroke-width="1"/>
<!-- drawing -->
<path d="M11.5 729.5H27L33.5 735.5V744.5C33.5 745.5 33 746.5 32 746.5H11.5C10.5 746.5 9.5 745.5 9.5 744.5V731.5C9.5 730.5 10.5 729.5 11.5 729.5Z" stroke="#222" stroke-width="1.2"/>
<path d="M27 729.5V735.5H33.5" stroke="#222" stroke-width="0.9"/>
<path d="M13.8 732.5H21.3V737.5H27.5V743.3H13.8Z M15.5 736.5L18.5 733" stroke="#222" stroke-width="1.1"/>
<!-- ===== navigator ===== -->
<path d="M1737.5 136V1015" stroke="#d6d6d6" stroke-width="1"/>
<path d="M1746.5 167.5V161.5L1751.3 155.5L1756.1 161.5V167.5M1746.5 167.5H1764V162.0L1760.8 159.1L1751.3 155.5M1756.1 162.0H1764" stroke="#1d2b3a" stroke-width="1.3"/>
<rect x="1788.5" y="154.5" width="17" height="13" rx="1.3" stroke="#222" stroke-width="1.2"/>
<path d="M1790.5 165.5V160.5L1794 156.5L1797.5 160.5V165.5M1790.5 165.5H1803V161L1801 159L1794 156.5M1797.5 161H1803" stroke="#222" stroke-width="1"/>
<path d="M1823.5 156.5V153.3L1818.5 158.5V167.5H1835.5V156.5H1823.5M1823.5 156.5V162.5L1818.5 167.5M1829.5 167.5V163.5H1835.5" stroke="#222" stroke-width="1.1"/>
<path d="M1862.5 156V166.5C1862.5 167 1862 167.5 1861.5 167.5H1852.5M1864.5 158V168.5C1864.5 169 1864 169.5 1863.5 169.5H1854.5" stroke="#222" stroke-width="1.1"/>
<rect x="1850.5" y="153.5" width="10" height="12" rx="1.3" fill="#f0f0f0" stroke="#222" stroke-width="1.1"/>
<path d="M1850.5 157.5H1857" stroke="#222" stroke-width="1.4"/>
<path d="M1889 156.5H1901M1889 160.5H1901M1889 164.5H1901" stroke="#222" stroke-width="1.1"/>
<path d="M1907 156.5V164.5L1911 160.5Z" fill="#222" stroke="none"/>
<circle cx="1749.5" cy="191.5" r="4.3" stroke="#555" stroke-width="1.1"/>
<path d="M1752.5 194.5L1756 198" stroke="#555" stroke-width="1.2"/>
<!-- tree chevrons -->
<g stroke="#2a2a2a" stroke-width="1.5">
<path d="M1745 215L1748.5 218.5L1752 215"/>
<path d="M1755.5 237L1759 240.5L1762.5 237"/>
<path d="M1755.5 369L1759 372.5L1762.5 369"/>
<path d="M1755.5 413L1759 416.5L1762.5 413"/>
<path d="M1755.5 479L1759 482.5L1762.5 479"/>
<path d="M1755.5 589L1759 592.5L1762.5 589"/>
<path d="M1755.5 655L1759 658.5L1762.5 655"/>
<path d="M1765.5 677L1769 680.5L1772.5 677"/>
</g>
<!-- tree icons -->
<g stroke="#2a2a2a" stroke-width="1.1">
<path d="M1759.5 222.5V216.5L1764.3 210.5L1769.1 216.5V222.5M1759.5 222.5H1777V217.0L1773.8 214.1L1764.3 210.5M1769.1 217.0H1777"/>
<path d="M1769.5 231.5H1777.5V237.5H1786.5V245.5H1769.5Z M1772.0 235.5L1775.0 232.5" fill="#e6e6e6"/>
<path d="M1779.5 253.5H1787.5V259.5H1796.5V267.5H1779.5Z M1782.0 257.5L1785.0 254.5"/>
<path d="M1779.5 275.5H1787.5V281.5H1796.5V289.5H1779.5Z M1782.0 279.5L1785.0 276.5"/>
<path d="M1779.5 297.5H1787.5V303.5H1796.5V311.5H1779.5Z M1782.0 301.5L1785.0 298.5"/>
<path d="M1779.5 319.5H1787.5V325.5H1796.5V333.5H1779.5Z M1782.0 323.5L1785.0 320.5"/>
<path d="M1779.5 341.5H1787.5V347.5H1796.5V355.5H1779.5Z M1782.0 345.5L1785.0 342.5"/>
<path d="M1770.5 368.5L1778 364.5L1785.5 368.5V377.5H1770.5Z" fill="#e6e6e6"/>
<path d="M1770.5 368.5H1785.5"/>
<path d="M1780.5 390.5L1788 386.5L1795.5 390.5V399.5H1780.5Z M1780.5 390.5H1795.5"/>
<path d="M1770.5 412.5L1778 408.5L1785.5 412.5V421.5H1770.5Z" fill="#e6e6e6"/>
<path d="M1780.5 434.5L1788 430.5L1795.5 434.5V443.5H1780.5Z"/>
<rect x="1769.5" y="451.5" width="17" height="14" rx="1"/>
<path d="M1772.5 454.5H1776.5V462.5H1772.5ZM1778.5 454.5H1783.5V458.5H1778.5Z"/>
<path d="M1769.5 474.5H1782.5L1786.5 478V487.5H1769.5Z" fill="#e6e6e6"/>
<path d="M1772 485L1781 477M1772 486.5H1784"/>
<path d="M1779.5 496.5H1792.5L1796.5 500V509.5H1779.5Z M1782 507L1791 499M1782 508.5H1794"/>
<path d="M1779.5 518.5H1792.5L1796.5 522V531.5H1779.5Z M1782 529L1791 521M1782 530.5H1794"/>
<circle cx="1778" cy="547" r="8"/>
<path d="M1775.5 539.5V554.5M1775.5 547H1785.5M1779 543.5H1785.5V550.5H1779"/>
<path d="M1769.5 562.5H1782.5L1786.5 566V576.5H1769.5Z"/>
<rect x="1772.5" y="567.5" width="7" height="6"/>
<path d="M1774.5 567.5V565.5H1781.5V571.5H1779.5"/>
<path d="M1770.5 584.5L1780 583L1785 585.5V596L1780 598.5L1770.5 596.5Z M1780 583V598.5" fill="#e6e6e6"/>
<path d="M1780.5 606.5L1790 605L1795 607.5V618L1790 620.5L1780.5 618.5Z M1790 605V620.5"/>
<path d="M1780.5 631.5L1785.5 628L1795 629.5V638.5L1790 642L1780.5 640.5Z M1780.5 631.5L1790 633.5L1795 629.5M1790 633.5V642"/>
<rect x="1771.5" y="648.5" width="13" height="16"/>
<path d="M1775.5 648.5V664.5M1780.5 648.5V664.5M1771.5 652.5H1784.5M1771.5 656.5H1784.5M1771.5 660.5H1784.5"/>
<path d="M1779.5 674.5H1796.5V682.5H1779.5Z" fill="#e6e6e6"/>
<path d="M1781 682L1785 675M1785 682L1789 675M1789 682L1793 675M1793 682L1796 677"/>
</g>
<g stroke="#2a2a2a" stroke-width="1.1">
<rect x="1791.5" y="692.5" width="13" height="16"/><path d="M1795.5 692.5V708.5M1800.5 692.5V708.5M1791.5 696.5H1804.5M1791.5 700.5H1804.5M1791.5 704.5H1804.5"/>
<rect x="1791.5" y="714.5" width="13" height="16"/><path d="M1795.5 714.5V730.5M1800.5 714.5V730.5M1791.5 718.5H1804.5M1791.5 722.5H1804.5M1791.5 726.5H1804.5"/>
<rect x="1791.5" y="736.5" width="13" height="16"/><path d="M1795.5 736.5V752.5M1800.5 736.5V752.5M1791.5 740.5H1804.5M1791.5 744.5H1804.5M1791.5 748.5H1804.5"/>
<rect x="1791.5" y="758.5" width="13" height="16"/><path d="M1795.5 758.5V774.5M1800.5 758.5V774.5M1791.5 762.5H1804.5M1791.5 766.5H1804.5M1791.5 770.5H1804.5"/>
<rect x="1791.5" y="780.5" width="13" height="16"/><path d="M1795.5 780.5V796.5M1800.5 780.5V796.5M1791.5 784.5H1804.5M1791.5 788.5H1804.5M1791.5 792.5H1804.5"/>
<rect x="1791.5" y="802.5" width="13" height="16"/><path d="M1795.5 802.5V818.5M1800.5 802.5V818.5M1791.5 806.5H1804.5M1791.5 810.5H1804.5M1791.5 814.5H1804.5"/>
<rect x="1791.5" y="824.5" width="13" height="16"/><path d="M1795.5 824.5V840.5M1800.5 824.5V840.5M1791.5 828.5H1804.5M1791.5 832.5H1804.5M1791.5 836.5H1804.5"/>
<rect x="1791.5" y="846.5" width="13" height="16"/><path d="M1795.5 846.5V862.5M1800.5 846.5V862.5M1791.5 850.5H1804.5M1791.5 854.5H1804.5M1791.5 858.5H1804.5"/>
<rect x="1791.5" y="868.5" width="13" height="16"/><path d="M1795.5 868.5V884.5M1800.5 868.5V884.5M1791.5 872.5H1804.5M1791.5 876.5H1804.5M1791.5 880.5H1804.5"/>
<path d="M1791.5 892.5V890.5H1804.5V892.5"/>
</g>
<!-- scrollbar arrows -->
<path d="M1905.5 216L1909 212.5L1912.5 216" stroke="#555" stroke-width="1.1"/>
<path d="M1905.5 881L1909 884.5L1912.5 881" stroke="#555" stroke-width="1.1"/>
<path d="M1748.5 896.5L1745 900L1748.5 903.5" stroke="#555" stroke-width="1.1"/>
<path d="M1890.5 896.5L1894 900L1890.5 903.5" stroke="#555" stroke-width="1.1"/>
<!-- bottom nav buttons -->
<circle cx="1755.5" cy="925.5" r="6" stroke="#3a7fd5" stroke-width="1.1"/>
<path d="M1755.5 922V929M1752 925.5H1759" stroke="#3a7fd5" stroke-width="1.1"/>
<rect x="1778.5" y="920.5" width="14" height="10" stroke="#3a7fd5" stroke-width="1.1"/>
<path d="M1781 923.5H1782M1783.5 923.5H1790M1781 926H1782M1783.5 926H1790M1781 928.5H1782M1783.5 928.5H1790" stroke="#3a7fd5" stroke-width="1"/>
<path d="M1809 919.5L1821 931.5M1821 919.5L1809 931.5" stroke="#e0452f" stroke-width="2"/>
<!-- properties -->
<path d="M1746.5 951L1750.5 955L1754.5 951Z" fill="#333" stroke="none"/>
<path d="M1743.5 973.5H1749V977.5H1755.5V983.5H1743.5Z" stroke="#222" stroke-width="1.1"/>
<!-- graphisoft id icon -->
<path d="M1745 1030V1021H1757" stroke="#333" stroke-width="1.3"/>
<rect x="1747.5" y="1024.3" width="12" height="8.7" stroke="#333" stroke-width="1.4"/>
<path d="M1737 1015.5H1917" stroke="#dcdcdc" stroke-width="1"/>
<path d="M1764.5 1016V1037M1894.5 1016V1037" stroke="#d4d4d4" stroke-width="1"/>
</svg>
<svg class="ov" width="1917" height="1037" fill="none" stroke="#262626" stroke-width="1.1">
<!-- zoom icons -->
<circle cx="57" cy="1005" r="5.3" stroke="#333"/>
<path d="M53 1009L49 1013M48 1005H53M49.5 1003L48 1005L49.5 1007" stroke="#333"/>
<circle cx="79" cy="1005" r="5.3" stroke="#b5b5b5"/>
<path d="M83 1009L86 1012M80 1005H86M84.5 1003L86 1005L84.5 1007" stroke="#b5b5b5"/>
<circle cx="101.5" cy="1004.5" r="5.3" stroke="#333"/>
<path d="M105.5 1008.5L109.5 1012.5M98.5 1004.5H104.5M101.5 1001.5V1007.5" stroke="#333"/>
<circle cx="129.5" cy="1004.5" r="5.5" stroke="#333"/>
<path d="M133.5 1008.5L137.5 1012.5" stroke="#333"/>
<path d="M129.5 1000.5V1001.5M129.5 1007.5V1008.5M125.5 1004.5H126.5M132.5 1004.5H133.5" stroke="#333" stroke-width="1.5"/>
<!-- arrows -->
<g fill="#222" stroke="none">
<path d="M254 1002.5V1009.5L258 1006Z"/><path d="M401 1002.5V1009.5L405 1006Z"/><path d="M549 1002.5V1009.5L553 1006Z"/>
<path d="M697 1002.5V1009.5L701 1006Z"/><path d="M845 1002.5V1009.5L849 1006Z"/><path d="M993 1002.5V1009.5L997 1006Z"/>
<path d="M1140 1002.5V1009.5L1144 1006Z"/><path d="M1287 1002.5V1009.5L1291 1006Z"/><path d="M1434 1002.5V1009.5L1438 1006Z"/>
<path d="M1581 1002.5V1009.5L1585 1006Z"/><path d="M1729 1002.5V1009.5L1733 1006Z"/>
</g>
<!-- rotate -->
<path d="M272.5 1004.5L277 1000L283 1006L278.5 1010.5Z" stroke="#333"/>
<path d="M281 1011.5C283 1011 285 1009.5 285.5 1007M283.5 1008.5L285.5 1006.5L287 1009" stroke="#333"/>
<!-- ruler -->
<path d="M420.5 1003.5H433.5V1008.5H420.5Z" stroke="#333" stroke-width="1.3"/>
<path d="M423.5 1003.5V1005.5M426.5 1003.5V1005M429.5 1003.5V1005.5" stroke="#333"/>
<!-- layers -->
<path d="M568 1005L572 1001.5H582L578 1005ZM568 1008L570 1006.3M580 1006.3L578 1008H568M568 1011L570 1009.3M580 1009.3L578 1011H568" stroke="#333" stroke-width="1.2"/>
<!-- model filter -->
<rect x="716.5" y="1000.5" width="13" height="10" stroke="#333" stroke-width="1.2"/>
<path d="M716.5 1003.5H729.5M718 1008L722 1004M722 1008L726 1004M726 1008L729 1005" stroke="#333"/>
<!-- pen -->
<path d="M866.5 1000V1007.5L870.5 1012L874.5 1007.5V1000" stroke="#333" stroke-width="1.2"/>
<!-- view rect -->
<rect x="1011.5" y="1000.5" width="14" height="10" stroke="#333" stroke-width="1.2"/>
<rect x="1014.5" y="1003.5" width="8" height="4" stroke="#333" stroke-width="1.2"/>
<!-- overrides -->
<path d="M1163 1002.5H1159.5V1010.5H1164M1164 1000C1166 999 1169 999 1170.5 1001.5M1169 1001.5H1171V999.5" stroke="#333"/>
<rect x="1165" y="1005" width="7" height="7" fill="#666" stroke="#333" stroke-width="1"/>
<!-- renovation house -->
<path d="M1305.5 1011.5L1311.5 1002L1315.5 1006V1011.5Z M1311.5 1002L1320 1007.5V1011.5H1315.5" stroke="#333"/>
<path d="M1305.5 1011.5L1311.5 1002" stroke="#aaa"/>
<!-- structure display -->
<path d="M1453 1004.5C1454 1001 1457 1000 1460 1000.5M1455 1006C1456 1003 1458.5 1002 1461 1002.5" stroke="#333"/>
<path d="M1456.5 1011.5V1005.5L1460 1003L1467.5 1006V1011.5Z" stroke="#333" stroke-width="1.2"/>
<rect x="1459.5" y="1007.5" width="2.5" height="3" stroke="#333" stroke-width="0.9"/>
<rect x="1463.5" y="1007.5" width="2.5" height="3" stroke="#333" stroke-width="0.9"/>
<!-- dimension units -->
<path d="M1599.5 1000.5H1613.5M1599.5 1011.5H1613.5M1599.5 1004.5V1011.5M1613.5 1004.5V1011.5M1599.5 1004.5H1613.5" stroke="#333" stroke-width="1.2"/>
<path d="M1603.5 999V1002M1609.5 999V1002" stroke="#333"/>
</svg>
</body></html>
